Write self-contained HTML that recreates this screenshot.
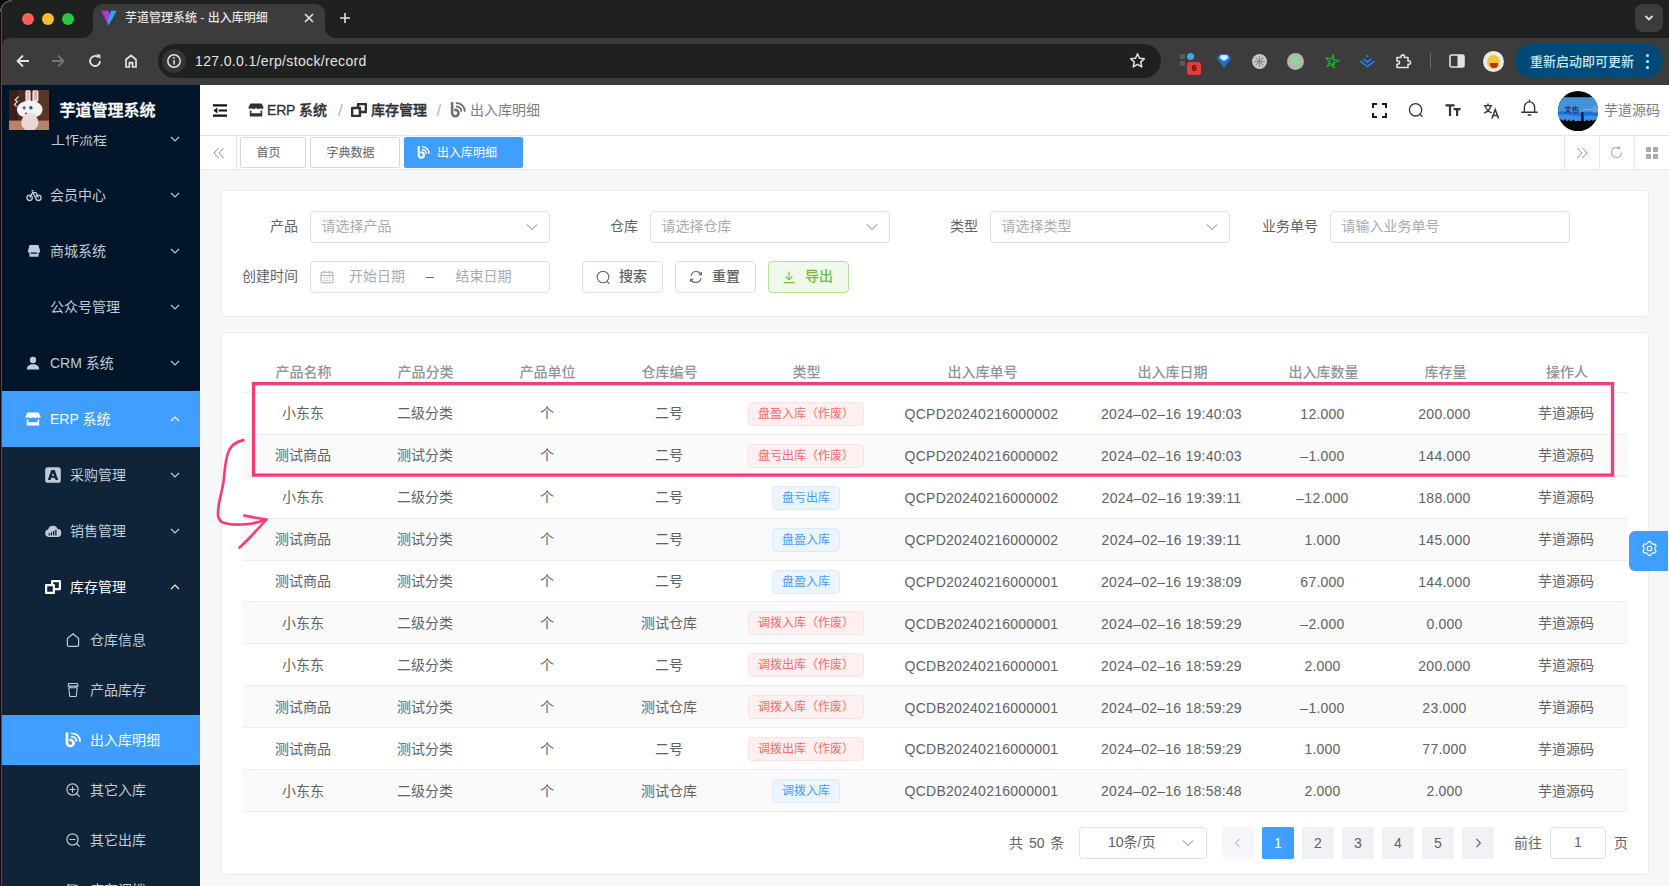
<!DOCTYPE html>
<html lang="zh-CN">
<head>
<meta charset="utf-8">
<title>芋道管理系统 - 出入库明细</title>
<style>
*{box-sizing:border-box;margin:0;padding:0}
html,body{width:1669px;height:886px;overflow:hidden;background:#f5f7f9}
body{position:relative;font-family:"Liberation Sans","Noto Sans CJK SC",sans-serif;font-size:14px;color:#606266;-webkit-font-smoothing:antialiased}
.abs{position:absolute}
svg{display:block}
/* ---------- browser chrome ---------- */
#tabbar{left:0;top:0;width:1669px;height:85px;background:#1f2020}
#toolbar{left:2px;top:38px;width:1667px;height:47px;background:#3c3c3c;border-radius:8px 0 0 0}
#tab{left:93px;top:4px;width:232px;height:34px;background:#3c3c3c;border-radius:10px 10px 0 0}
#tab:before,#tab:after{content:"";position:absolute;bottom:0;width:10px;height:10px}
#tab:before{left:-10px;background:radial-gradient(circle at 0 0,rgba(0,0,0,0) 9.5px,#3c3c3c 10px)}
#tab:after{right:-10px;background:radial-gradient(circle at 100% 0,rgba(0,0,0,0) 9.5px,#3c3c3c 10px)}
.dot{width:12px;height:12px;border-radius:50%;top:13px}
#tabtitle{left:125px;top:10px;font-size:12px;color:#e3e3e3;line-height:16px;white-space:nowrap;font-weight:500}
#urlbar{left:158px;top:44px;width:1003px;height:34px;border-radius:17px;background:#1f2020}
#urltext{left:195px;top:52px;font-size:14px;letter-spacing:.35px;line-height:18px;color:#e3e3e3;white-space:nowrap}
#update{left:1515px;top:44px;width:148px;height:34px;border-radius:17px;background:#004a77}
#updtext{left:1530px;top:53px;font-size:13px;line-height:17px;color:#c2e7ff;white-space:nowrap;font-weight:500}
#ddbtn{left:1635px;top:4px;width:28px;height:28px;border-radius:8px;background:#3c3c3c}

/* ---------- sidebar ---------- */
#side{left:2px;top:85px;width:198px;height:801px;background:#001529;overflow:hidden}
#logo{left:0;top:0;width:199px;height:50px;background:#001529;z-index:3}
#logoimg{left:7px;top:5px;width:40px;height:40px;overflow:hidden;background:#6b4a3c}
#logotitle{left:57.5px;top:14px;font-size:16px;font-weight:500;-webkit-text-stroke:.4px #fff;color:#fff;line-height:24px;white-space:nowrap}
#menu{left:-1px;top:50px;width:199px;height:751px;overflow:hidden}
.mi{position:absolute;left:0;width:199px;height:56px;line-height:56px;color:#bfcbd9;font-size:14px;white-space:nowrap}
.mi.s{height:50px;line-height:50px}
.mi.sub{background:#0f2438}
.mi.act{background:#409eff;color:#fff}
.mi .ic{position:absolute;top:50%;transform:translate(-50%,-50%)}
.mi .ar{position:absolute;left:168px;top:50%;margin-top:-6px}
.mi span{position:absolute;top:0}

/* ---------- header ---------- */
#hdr{left:200px;top:85px;width:1469px;height:51px;background:#fff;border-bottom:1px solid #e4e7ed}
#tags{left:200px;top:136px;width:1469px;height:34px;background:#fff;border-bottom:1px solid #e4e7ed}
.bc{top:99px;line-height:22px;font-size:14px;white-space:nowrap}
.bc.b{font-weight:500;color:#303133;-webkit-text-stroke:.35px #303133}
.bc.g{color:#7b7d82}
.tag{top:137px;height:31px;border:1px solid #d9d9d9;border-radius:2px;font-size:12px;line-height:30.5px;color:#606266;background:#fff;white-space:nowrap}
.tag.on{background:#409eff;border-color:#409eff;color:#fff}
.vsep{top:136px;width:1px;height:33px;background:#e4e7ed}

/* ---------- content ---------- */
.card{background:#fff;border:1px solid #e8ebf0;border-radius:4px}
.lbl{font-size:14px;line-height:31px;color:#606266;text-align:right;white-space:nowrap;width:56px}
.inp{height:32px;width:240px;border:1px solid #dcdfe6;border-radius:4px;background:#fff;font-size:14px;line-height:29px;color:#a8abb2;padding-left:10.5px;white-space:nowrap}
.btn{height:32px;width:81px;border:1px solid #dcdfe6;border-radius:4px;background:#fff;font-size:14px;line-height:29px;color:#606266;white-space:nowrap;font-weight:500}
.btn.g{background:#f0f9eb;border-color:#b3e19d;color:#67c23a}
.th{font-size:14px;line-height:23px;color:#909399;font-weight:500;text-align:center;white-space:nowrap}
.td{font-size:14px;line-height:23px;color:#606266;text-align:center;white-space:nowrap}
.td.n{letter-spacing:.24px}
.row{left:242.5px;width:1385.5px;border-bottom:1px solid #ebeef5}
.row.st{background:#fafafa}
.tg{height:24px;border-radius:4px;font-size:12px;line-height:22px;text-align:center;white-space:nowrap}
.tg.r{background:#fef0f0;border:1px solid #fde2e2;color:#f56c6c}
.tg.b{background:#ecf5ff;border:1px solid #d9ecff;color:#409eff}
.pg{top:827px;width:32px;height:32px;border-radius:2px;background:#f0f2f5;color:#606266;font-size:14px;line-height:32px;text-align:center}
.pg.on{background:#409eff;color:#fff}
</style>
</head>
<body>
<!-- browser chrome -->
<div id="tabbar" class="abs"></div>
<div id="toolbar" class="abs"></div>
<div id="tab" class="abs"></div>
<div class="abs dot" style="left:22px;background:#fe5f57"></div>
<div class="abs dot" style="left:42px;background:#febc2e"></div>
<div class="abs dot" style="left:62px;background:#28c840"></div>
<div id="tabtitle" class="abs">芋道管理系统 - 出入库明细</div>
<div id="urlbar" class="abs"></div>
<div id="urltext" class="abs">127.0.0.1/erp/stock/record</div>
<div id="update" class="abs"></div>
<div id="updtext" class="abs">重新启动即可更新</div>
<div id="ddbtn" class="abs"></div>

<!-- favicon -->
<svg class="abs" style="left:101px;top:10px" width="16" height="16" viewBox="0 0 16 16"><path d="M0.4 0.8 L7.4 15.4 L11 7.6 L6.4 0.8 Z" fill="#c02dd8"/><path d="M3.6 0.8 H7.2 L9 4.6 L7.4 8.6 Z" fill="#8d4be8"/><path d="M10.2 0.8 H15.8 L7.4 15.4 L6.6 11.2 Z" fill="#25a9f5"/></svg>
<!-- tab close / new tab -->
<svg class="abs" style="left:303px;top:12px" width="12" height="12" viewBox="0 0 12 12"><path d="M2 2 L10 10 M10 2 L2 10" stroke="#e3e3e3" stroke-width="1.7" fill="none"/></svg>
<svg class="abs" style="left:339px;top:12px" width="12" height="12" viewBox="0 0 12 12"><path d="M6 1 V11 M1 6 H11" stroke="#e3e3e3" stroke-width="1.6" fill="none"/></svg>
<svg class="abs" style="left:1643px;top:13px" width="12" height="10" viewBox="0 0 12 10"><path d="M2.5 3 L6 6.5 L9.5 3" stroke="#e3e3e3" stroke-width="1.8" fill="none"/></svg>
<!-- nav -->
<svg class="abs" style="left:15px;top:53px" width="16" height="16" viewBox="0 0 16 16"><path d="M14 8 H3 M8 2.5 L2.5 8 L8 13.5" stroke="#e3e3e3" stroke-width="1.8" fill="none"/></svg>
<svg class="abs" style="left:50px;top:53px" width="16" height="16" viewBox="0 0 16 16"><path d="M2 8 H13 M8 2.5 L13.5 8 L8 13.5" stroke="#777" stroke-width="1.8" fill="none"/></svg>
<svg class="abs" style="left:87px;top:53px" width="16" height="16" viewBox="0 0 16 16"><path d="M13 8 A5 5 0 1 1 11.4 4.3" stroke="#e3e3e3" stroke-width="1.8" fill="none"/><path d="M9 1.6 H13.4 V6 Z" fill="#e3e3e3"/></svg>
<svg class="abs" style="left:123px;top:53px" width="16" height="16" viewBox="0 0 16 16"><path d="M3 14 V6.5 L8 2.5 L13 6.5 V14 H9.6 V9.6 H6.4 V14 Z" stroke="#e3e3e3" stroke-width="1.7" fill="none" stroke-linejoin="round"/></svg>
<!-- info -->
<div class="abs" style="left:162px;top:49px;width:24px;height:24px;border-radius:50%;background:#343535"></div>
<svg class="abs" style="left:166px;top:53px" width="16" height="16" viewBox="0 0 16 16"><circle cx="8" cy="8" r="6.2" stroke="#e3e3e3" stroke-width="1.5" fill="none"/><path d="M8 7.2 V11.4" stroke="#e3e3e3" stroke-width="1.6"/><circle cx="8" cy="4.9" r="0.95" fill="#e3e3e3"/></svg>
<!-- star -->
<svg class="abs" style="left:1129px;top:52px" width="17" height="17" viewBox="0 0 17 17"><path d="M8.5 1.8 L10.5 6.3 L15.4 6.8 L11.7 10.1 L12.8 14.9 L8.5 12.4 L4.2 14.9 L5.3 10.1 L1.6 6.8 L6.5 6.3 Z" stroke="#e3e3e3" stroke-width="1.5" fill="none" stroke-linejoin="round"/></svg>
<!-- extensions -->
<div class="abs" style="left:1180px;top:54px;width:5px;height:5px;background:#5a5a5a;border-radius:1px"></div>
<div class="abs" style="left:1180px;top:61px;width:5px;height:5px;background:#5a5a5a;border-radius:1px"></div>
<div class="abs" style="left:1187px;top:53px;width:7px;height:7px;background:#39a9ea;border-radius:50% 50% 50% 50%"></div>
<div class="abs" style="left:1187px;top:62px;width:14px;height:13px;background:#ea3b35;border-radius:3px;color:#1f2020;font-size:9px;line-height:13px;text-align:center;font-weight:bold">6</div>
<svg class="abs" style="left:1217px;top:53px" width="14" height="16" viewBox="0 0 14 16"><path d="M3 1 H11 L14 5 L7 15 L0 5 Z" fill="#1a73d9"/><path d="M4 2 H10 L11.5 5 L7 8 L2.5 5 Z" fill="#cfeaff"/></svg>
<div class="abs" style="left:1252px;top:54px;width:15px;height:15px;border-radius:50%;background:#c8c8c8"></div>
<svg class="abs" style="left:1252px;top:54px" width="15" height="15" viewBox="0 0 15 15"><path d="M7.5 2 V13 M2 7.5 H13 M3.6 3.6 L11.4 11.4 M11.4 3.6 L3.6 11.4" stroke="#8c8c8c" stroke-width="1.2"/></svg>
<div class="abs" style="left:1287px;top:53px;width:17px;height:17px;border-radius:50%;background:#b5b5b5"></div>
<div class="abs" style="left:1291px;top:57px;width:9px;height:9px;border-radius:50%;background:#8fd68f"></div>
<svg class="abs" style="left:1323px;top:52px" width="18" height="18" viewBox="0 0 18 18"><g transform="rotate(12 9 9.4)"><path d="M9 2 L12.6 15.4 L2 7 H16 L5.4 15.4 Z" stroke="#1faa2c" stroke-width="1.2" fill="none" stroke-linejoin="round"/></g></svg>
<svg class="abs" style="left:1359px;top:53px" width="17" height="16" viewBox="0 0 17 16"><path d="M1.2 8 L8.4 13.6 L15.6 8 M4.4 5.8 L8.4 9.2 L12.4 5.8" stroke="#2b7cf0" stroke-width="1.6" fill="none"/><circle cx="8.4" cy="3.2" r="1.1" fill="#2b7cf0"/></svg>
<svg class="abs" style="left:1394px;top:52px" width="18" height="18" viewBox="0 0 18 18"><path d="M3 5.5 H7 V4.6 A1.7 1.7 0 0 1 10.4 4.6 V5.5 H14 V9 H14.9 A1.7 1.7 0 0 1 14.9 12.4 H14 V15.5 H3 V12.2 H4 A1.6 1.6 0 0 0 4 9 H3 Z" stroke="#e3e3e3" stroke-width="1.6" fill="none" stroke-linejoin="round"/></svg>
<div class="abs" style="left:1430px;top:53px;width:1px;height:16px;background:#6a6a6a"></div>
<svg class="abs" style="left:1449px;top:54px" width="16" height="14" viewBox="0 0 16 14"><rect x="1" y="1" width="14" height="12" rx="1.5" stroke="#e3e3e3" stroke-width="1.6" fill="none"/><rect x="8.5" y="1" width="6.5" height="12" fill="#e3e3e3"/></svg>
<div class="abs" style="left:1483px;top:51px;width:21px;height:21px;border-radius:50%;background:#ecebe6"></div>
<div class="abs" style="left:1487px;top:55px;width:13px;height:14px;border-radius:50%;background:#f6c33c"></div>
<div class="abs" style="left:1490px;top:63px;width:8px;height:5px;border-radius:0 0 5px 5px;background:#b4302b"></div>
<div class="abs" style="left:1645.5px;top:53.5px;width:3px;height:3px;border-radius:50%;background:#c2e7ff;box-shadow:0 6px 0 #c2e7ff,0 12px 0 #c2e7ff"></div>

<div id="side" class="abs">
<div id="menu" class="abs">
<div class="abs" style="left:0;top:312px;width:199px;height:500px;background:#0f2438"></div>
<div class="mi " style="top:-24px;"><span style="left:50px">工作流程</span><svg class="ar" width="12" height="12" viewBox="0 0 12 12"><path d="M2 4 L6 8 L10 4" stroke="currentColor" stroke-width="1.1" fill="none"/></svg></div>
<div class="mi " style="top:32px;"><svg class="ic" style="left:33px" width="16" height="14" viewBox="0 0 16 14"><circle cx="3.6" cy="9.8" r="2.7" stroke="currentColor" stroke-width="1.3" fill="none"/><circle cx="12.4" cy="9.8" r="2.7" stroke="currentColor" stroke-width="1.3" fill="none"/><path d="M3.6 9.8 L6.6 4.6 L9.4 9.4 M6.6 4.6 H10 L12.4 9.8 M5.4 2.6 H7.6" stroke="currentColor" stroke-width="1.3" fill="none"/></svg><span style="left:49px">会员中心</span><svg class="ar" width="12" height="12" viewBox="0 0 12 12"><path d="M2 4 L6 8 L10 4" stroke="currentColor" stroke-width="1.1" fill="none"/></svg></div>
<div class="mi " style="top:88px;"><svg class="ic" style="left:32.5px" width="12" height="12" viewBox="0 0 12 12"><path fill-rule="evenodd" d="M1.6 0 H10.4 L12 5.4 V7.4 H10.6 V11.8 H1.4 V7.4 H0 V5.4 Z M2.8 7.4 V8.8 H9.2 V7.4 Z" fill="currentColor"/></svg><span style="left:49px">商城系统</span><svg class="ar" width="12" height="12" viewBox="0 0 12 12"><path d="M2 4 L6 8 L10 4" stroke="currentColor" stroke-width="1.1" fill="none"/></svg></div>
<div class="mi " style="top:144px;"><span style="left:49px">公众号管理</span><svg class="ar" width="12" height="12" viewBox="0 0 12 12"><path d="M2 4 L6 8 L10 4" stroke="currentColor" stroke-width="1.1" fill="none"/></svg></div>
<div class="mi " style="top:200px;"><svg class="ic" style="left:32px" width="14" height="14" viewBox="0 0 14 14"><circle cx="7" cy="4" r="3.2" fill="currentColor"/><path d="M0.8 13.4 C0.8 9.6 3.6 8.2 7 8.2 C10.4 8.2 13.2 9.6 13.2 13.4 Z" fill="currentColor"/></svg><span style="left:49px">CRM 系统</span><svg class="ar" width="12" height="12" viewBox="0 0 12 12"><path d="M2 4 L6 8 L10 4" stroke="currentColor" stroke-width="1.1" fill="none"/></svg></div>
<div class="mi act" style="top:256px;"><svg class="ic" style="left:32px" width="16" height="14" viewBox="0 0 16 14"><path d="M2.4 0.6 H13.6 L15.6 4.4 C15.6 6 13.4 6.4 12.6 5 C11.8 6.4 9.2 6.4 8 5 C6.8 6.4 4.2 6.4 3.4 5 C2.6 6.4 0.4 6 0.4 4.4 Z" fill="currentColor"/><path d="M1.8 7.4 V13.4 H14.2 V7.4 H12.6 V10.2 H3.4 V7.4 Z" fill="currentColor"/></svg><span style="left:49px">ERP 系统</span><svg class="ar" width="12" height="12" viewBox="0 0 12 12"><path d="M2 8 L6 4 L10 8" stroke="currentColor" stroke-width="1.1" fill="none"/></svg></div>
<div class="mi sub" style="top:312px;"><svg class="ic" style="left:52px" width="16" height="16" viewBox="0 0 16 16"><rect x="0.2" y="0.2" width="15.6" height="15.6" rx="2.6" fill="currentColor"/><path d="M2.8 13 L6.3 3 H9.7 L13.2 13 H10.6 L8 5.8 L7.1 8.6 L9.8 9.8 L10.3 11.6 L6.5 10.4 L5.6 13 Z" fill="#0f2438"/></svg><span style="left:69px">采购管理</span><svg class="ar" width="12" height="12" viewBox="0 0 12 12"><path d="M2 4 L6 8 L10 4" stroke="currentColor" stroke-width="1.1" fill="none"/></svg></div>
<div class="mi sub" style="top:368px;"><svg class="ic" style="left:52px" width="17" height="13" viewBox="0 0 17 13"><path d="M4.2 12.4 A3.7 3.7 0 0 1 3.6 5.1 A5 5 0 0 1 13.2 4.6 A3.9 3.9 0 0 1 12.8 12.4 Z" fill="currentColor"/><path d="M4.8 11 V8.8 M7 11 V7.8 M9.2 11 V6.6 M11.4 11 V5.2" stroke="#0f2438" stroke-width="1.3"/></svg><span style="left:69px">销售管理</span><svg class="ar" width="12" height="12" viewBox="0 0 12 12"><path d="M2 4 L6 8 L10 4" stroke="currentColor" stroke-width="1.1" fill="none"/></svg></div>
<div class="mi sub" style="top:424px;color:#fff"><svg class="ic" style="left:52px" width="16" height="14" viewBox="0 0 16 14"><path d="M7.1 4 V1.1 H14.9 V9.1 H10" stroke="currentColor" stroke-width="2.2" fill="none" stroke-linejoin="round"/><rect x="1.1" y="5.1" width="7.8" height="7.8" stroke="currentColor" stroke-width="2.2" fill="none" stroke-linejoin="round"/></svg><span style="left:69px">库存管理</span><svg class="ar" width="12" height="12" viewBox="0 0 12 12"><path d="M2 8 L6 4 L10 8" stroke="currentColor" stroke-width="1.1" fill="none"/></svg></div>
<div class="mi sub s" style="top:480px;"><svg class="ic" style="left:72px" width="14" height="15" viewBox="0 0 14 15"><path d="M1.4 6 L7 1.2 L12.6 6 V12.4 Q12.6 13.8 11.2 13.8 H2.8 Q1.4 13.8 1.4 12.4 Z" stroke="currentColor" stroke-width="1.2" fill="none" stroke-linejoin="round"/></svg><span style="left:89px">仓库信息</span></div>
<div class="mi sub s" style="top:530px;"><svg class="ic" style="left:72px" width="12" height="15" viewBox="0 0 12 15"><path d="M1.6 1 H10.4 L11 3.6 H1 Z M1.8 5.2 H10.2 L9.2 14 H2.8 Z" stroke="currentColor" stroke-width="1.1" fill="none" stroke-linejoin="round"/><path d="M3 3.6 V5.2 M9 3.6 V5.2" stroke="currentColor" stroke-width="1.1"/></svg><span style="left:89px">产品库存</span></div>
<div class="mi act s" style="top:580px;"><svg class="ic" style="left:72px" width="16.5" height="15.5" viewBox="0 0 15 15" preserveAspectRatio="none"><path d="M2 0.8 V10.4 A3 3 0 1 0 5 7.4" stroke="currentColor" stroke-width="2.4" fill="none" stroke-linecap="round"/><path d="M6.2 1 A7.4 7.4 0 0 1 13.8 8.4 M6.2 4.2 A4.4 4.4 0 0 1 10.6 8.4" stroke="currentColor" stroke-width="1.7" fill="none" stroke-linecap="round"/></svg><span style="left:89px">出入库明细</span></div>
<div class="mi sub s" style="top:630px;"><svg class="ic" style="left:72px" width="15" height="15" viewBox="0 0 15 15"><circle cx="7" cy="7" r="5.6" stroke="currentColor" stroke-width="1.2" fill="none"/><path d="M4.4 7 H9.6 M7 4.4 V9.6 M11 11 L13.8 13.8" stroke="currentColor" stroke-width="1.2" stroke-linecap="round"/></svg><span style="left:89px">其它入库</span></div>
<div class="mi sub s" style="top:680px;"><svg class="ic" style="left:72px" width="15" height="15" viewBox="0 0 15 15"><circle cx="7" cy="7" r="5.6" stroke="currentColor" stroke-width="1.2" fill="none"/><path d="M4.4 7 H9.6 M11 11 L13.8 13.8" stroke="currentColor" stroke-width="1.2" stroke-linecap="round"/></svg><span style="left:89px">其它出库</span></div>
<div class="mi sub s" style="top:730px;"><svg class="ic" style="left:72px" width="14" height="14" viewBox="0 0 14 14"><path d="M2 1 V13 M2 2 H9 A3 3 0 0 1 9 8 H2" stroke="currentColor" stroke-width="1.2" fill="none"/></svg><span style="left:89px">库存调拨</span></div>
</div>
<div id="logo" class="abs"><div id="logoimg" class="abs"><svg width="40" height="40" viewBox="0 0 40 40"><rect width="40" height="40" fill="#4b2c22"/><rect x="28" y="0" width="12" height="31" fill="#5a3526"/><rect x="0" y="0" width="9" height="31" fill="#3a2019"/><rect y="30.6" width="40" height="9.4" fill="#b8826a"/><path d="M9.5 6.5 L6.2 10 L8.4 11.6 L5.4 14.6 L7.6 16.6" stroke="#d8d4d2" stroke-width="1.3" fill="none"/><rect x="16.4" y="0" width="5.2" height="12" rx="2" fill="#efe6e6"/><rect x="17.8" y="0" width="2.2" height="10" fill="#e4b7b3"/><rect x="23.4" y="0" width="6" height="12" rx="2" fill="#efe6e6"/><rect x="25.2" y="0" width="2.6" height="10" fill="#dfa89f"/><ellipse cx="20.8" cy="32.5" rx="8.6" ry="8.4" fill="#e9d6d8"/><ellipse cx="20.7" cy="19.4" rx="12.8" ry="9" fill="#f4f2f3"/><ellipse cx="20.5" cy="26" rx="7" ry="3" fill="#ecd9db"/><circle cx="15.2" cy="17.8" r="1.6" fill="#4a6a94"/><circle cx="21.9" cy="17.8" r="1.7" fill="#2f4f80"/><ellipse cx="17" cy="23.3" rx="1.1" ry="0.8" fill="#4a3a3a"/></svg></div><div id="logotitle" class="abs">芋道管理系统</div></div>
</div>
<div class="abs" style="left:0;top:0;width:1px;height:886px;background:#150b0f;z-index:9"></div><div class="abs" style="left:1px;top:0;width:1px;height:886px;background:#4c4c4e;z-index:9"></div><div class="abs" style="left:0;top:0;width:12px;height:12px;z-index:10;background:radial-gradient(circle at 12px 12px,rgba(0,0,0,0) 10.5px,#5a5a5c 11px,#5a5a5c 11.8px,#0b0508 12.3px)"></div>


<div id="hdr" class="abs"></div>
<div id="tags" class="abs"></div>
<svg class="abs" style="left:213px;top:104px" width="14" height="13" viewBox="0 0 14 13"><path d="M0 1.4 H14 M5.6 6.5 H14 M0 11.6 H14" stroke="#111" stroke-width="2.2"/><path d="M4.4 3.6 V9.4 L0.4 6.5 Z" fill="#111"/></svg>
<svg class="abs" style="left:248px;top:103px" width="16" height="14" viewBox="0 0 16 14"><path d="M2.4 0.6 H13.6 L15.6 4.4 C15.6 6 13.4 6.4 12.6 5 C11.8 6.4 9.2 6.4 8 5 C6.8 6.4 4.2 6.4 3.4 5 C2.6 6.4 0.4 6 0.4 4.4 Z" fill="#303133"/><path d="M1.8 7.4 V13.4 H14.2 V7.4 H12.6 V10.2 H3.4 V7.4 Z" fill="#303133"/></svg>
<div class="abs bc b" style="left:267px"><span style="font-weight:400;letter-spacing:-.2px;-webkit-text-stroke:.3px #303133">ERP</span> 系统</div>
<div class="abs bc" style="left:338px;color:#b4b7bd;font-size:17px;top:100px">/</div>
<svg class="abs" style="left:351px;top:103px" width="16" height="14" viewBox="0 0 16 14"><path d="M7.1 4 V1.1 H14.9 V9.1 H10" stroke="#303133" stroke-width="2.5" fill="none" stroke-linejoin="round"/><rect x="1.1" y="5.1" width="7.8" height="7.8" stroke="#303133" stroke-width="2.5" fill="none" stroke-linejoin="round"/></svg>
<div class="abs bc b" style="left:371px">库存管理</div>
<div class="abs bc" style="left:436.5px;color:#b4b7bd;font-size:17px;top:100px">/</div>
<svg class="abs" style="left:450px;top:102px" width="16" height="16" viewBox="0 0 15 15"><path d="M2 0.8 V10.4 A3 3 0 1 0 5 7.4" stroke="#6b6e74" stroke-width="2.4" fill="none" stroke-linecap="round"/><path d="M6.2 1 A7.4 7.4 0 0 1 13.8 8.4 M6.2 4.2 A4.4 4.4 0 0 1 10.6 8.4" stroke="#6b6e74" stroke-width="1.7" fill="none" stroke-linecap="round"/></svg>
<div class="abs bc g" style="left:470px">出入库明细</div>
<!-- right tools -->
<svg class="abs" style="left:1372px;top:103px" width="15" height="15" viewBox="0 0 15 15"><path d="M1 5 V1 H5 M10 1 H14 V5 M14 10 V14 H10 M5 14 H1 V10" stroke="#1a1a1a" stroke-width="2" fill="none"/></svg>
<svg class="abs" style="left:1408px;top:102px" width="16" height="16" viewBox="0 0 16 16"><circle cx="7.6" cy="7.8" r="6.2" stroke="#333" stroke-width="1.3" fill="none"/><path d="M12 12.4 L14.4 14.8" stroke="#333" stroke-width="1.3"/></svg>
<svg class="abs" style="left:1445px;top:104px" width="17" height="13" viewBox="0 0 17 13"><path d="M0.5 1.4 H9.5 M5 1.4 V12 M8.6 5.2 H15.6 M12.1 5.2 V12" stroke="#333" stroke-width="2.2" fill="none"/></svg>
<svg class="abs" style="left:1483px;top:103px" width="17" height="16" viewBox="0 0 17 16"><path d="M0.8 2.6 H9.2 M5 0.6 V2.6 M2.2 2.8 C3 6 5.6 8.6 8.8 9.8 M7.8 2.8 C7 6 4.4 8.8 1.2 10" stroke="#333" stroke-width="1.4" fill="none"/><path d="M9 15.4 L12.2 6.6 L15.6 15.4 M10.2 12.6 H14.4" stroke="#333" stroke-width="1.5" fill="none"/></svg>
<svg class="abs" style="left:1521px;top:99px" width="17" height="18" viewBox="0 0 17 18"><path d="M8.5 1.2 V2.4 M3.4 13 V8 A5.1 5.1 0 0 1 13.6 8 V13 M0.8 13.2 H16.2 M7.2 16 H9.8" stroke="#333" stroke-width="1.4" fill="none" stroke-linecap="round"/></svg>
<svg class="abs" style="left:1558px;top:90.5px" width="40" height="40" viewBox="0 0 40 40"><defs><clipPath id="avc"><circle cx="20" cy="20" r="20"/></clipPath></defs><g clip-path="url(#avc)"><rect width="40" height="40" fill="#04040a"/><rect y="6.2" width="40" height="23" fill="#4293dc"/><path d="M0 21 C8 19.5 16 23 24 21.5 C30 20.4 36 21 40 22 V30 H0 Z" fill="#1c6fd2"/><path d="M0 23.5 C10 22.5 18 26.5 27 25 C32 24.2 36 24.6 40 25.4 V30 H0 Z" fill="#3f8ff0"/><rect x="34.6" y="15.6" width="6" height="5.6" fill="#6e9fcf"/><path d="M25 18.6 H33" stroke="#8fc0ee" stroke-width="0.8"/><path d="M23.4 21 H25.4 L25.8 30 H23 Z" fill="#0c1830"/><path d="M0 29 L3 28.2 L5 30 L7 28 L9 30.4 L11 28.6 L13 30.6 L15.5 28.4 L17.5 30.6 L20 29.4 L22 30.8 L24 29 L27 30.6 L29 28.6 L31 30.4 L33 28.4 L35 30 L37 28.4 L40 29.4 V40 H0 Z" fill="#04040a"/><text x="6.2" y="21.2" font-size="7.4" font-weight="700" fill="#26267e" font-family="Liberation Sans, Noto Sans CJK SC, sans-serif">文也</text></g></svg>
<div class="abs bc g" style="left:1604px">芋道源码</div>
<!-- tags -->
<svg class="abs" style="left:213px;top:147px" width="12" height="12" viewBox="0 0 12 12"><path d="M5.6 1 L1 6 L5.6 11 M10.6 1 L6 6 L10.6 11" stroke="#909399" stroke-width="1" fill="none"/></svg>
<div class="abs vsep" style="left:236px"></div>
<div class="abs tag" style="left:240px;width:66px;padding-left:15.5px">首页</div>
<div class="abs tag" style="left:310px;width:90px;padding-left:15.5px">字典数据</div>
<div class="abs tag on" style="left:404px;width:119px;padding-left:32px">出入库明细</div>
<svg class="abs" style="left:417px;top:146px" width="13" height="13" viewBox="0 0 15 15"><path d="M2 0.8 V10.4 A3 3 0 1 0 5 7.4" stroke="#fff" stroke-width="2.4" fill="none" stroke-linecap="round"/><path d="M6.2 1 A7.4 7.4 0 0 1 13.8 8.4 M6.2 4.2 A4.4 4.4 0 0 1 10.6 8.4" stroke="#fff" stroke-width="1.7" fill="none" stroke-linecap="round"/></svg>
<div class="abs vsep" style="left:1564px"></div>
<div class="abs vsep" style="left:1599px"></div>
<div class="abs vsep" style="left:1634px"></div>
<svg class="abs" style="left:1576px;top:147px" width="12" height="12" viewBox="0 0 12 12"><path d="M1.4 1 L6 6 L1.4 11 M6.4 1 L11 6 L6.4 11" stroke="#909399" stroke-width="1" fill="none"/></svg>
<svg class="abs" style="left:1610px;top:146px" width="13" height="13" viewBox="0 0 13 13"><path d="M11.6 6.5 A5.1 5.1 0 1 1 9.6 2.4" stroke="#a8abb2" stroke-width="1.1" fill="none"/><path d="M9.6 0.4 V2.8 H7.2" stroke="#a8abb2" stroke-width="1.1" fill="none"/></svg>
<svg class="abs" style="left:1646px;top:147px" width="12" height="12" viewBox="0 0 12 12"><rect x="0" y="0" width="5" height="5" rx="0.8" fill="#a8abb2"/><rect x="7" y="0" width="5" height="5" rx="0.8" fill="#a8abb2"/><rect x="0" y="7" width="5" height="5" rx="0.8" fill="#a8abb2"/><rect x="7" y="7" width="5" height="5" rx="0.8" fill="#a8abb2"/></svg>

<div class="abs card" style="left:221px;top:190px;width:1428px;height:127px"></div>
<div class="abs lbl" style="left:242px;top:211px">产品</div><div class="abs inp" style="left:310px;top:211px">请选择产品</div><svg class="abs" style="left:525px;top:220px" width="14" height="14" viewBox="0 0 14 14"><path d="M1.8 4.4 L7 9.4 L12.2 4.4" stroke="#a8abb2" stroke-width="1.1" fill="none"/></svg>
<div class="abs lbl" style="left:582px;top:211px">仓库</div><div class="abs inp" style="left:650px;top:211px">请选择仓库</div><svg class="abs" style="left:865px;top:220px" width="14" height="14" viewBox="0 0 14 14"><path d="M1.8 4.4 L7 9.4 L12.2 4.4" stroke="#a8abb2" stroke-width="1.1" fill="none"/></svg>
<div class="abs lbl" style="left:922px;top:211px">类型</div><div class="abs inp" style="left:990px;top:211px">请选择类型</div><svg class="abs" style="left:1205px;top:220px" width="14" height="14" viewBox="0 0 14 14"><path d="M1.8 4.4 L7 9.4 L12.2 4.4" stroke="#a8abb2" stroke-width="1.1" fill="none"/></svg>
<div class="abs lbl" style="left:1262px;top:211px">业务单号</div><div class="abs inp" style="left:1330px;top:211px">请输入业务单号</div>
<div class="abs lbl" style="left:242px;top:261px">创建时间</div><div class="abs inp" style="left:310px;top:261px"></div>
<svg class="abs" style="left:320px;top:270px" width="14" height="14" viewBox="0 0 14 14"><rect x="1" y="2.2" width="12" height="10.6" rx="1" stroke="#a8abb2" stroke-width="1" fill="none"/><path d="M1 5.4 H13 M4.2 0.8 V3.4 M9.8 0.8 V3.4" stroke="#a8abb2" stroke-width="1" /><path d="M3.6 8 H5 M6.3 8 H7.7 M9 8 H10.4 M3.6 10.4 H5 M6.3 10.4 H7.7 M9 10.4 H10.4" stroke="#a8abb2" stroke-width="1"/></svg>
<div class="abs" style="left:349px;top:261px;line-height:31px;color:#a8abb2;white-space:nowrap">开始日期</div><div class="abs" style="left:426px;top:261px;line-height:31px;color:#606266">–</div><div class="abs" style="left:455.5px;top:261px;line-height:31px;color:#a8abb2;white-space:nowrap">结束日期</div>
<div class="abs btn" style="left:582px;top:261px;padding-left:36px">搜索</div><svg class="abs" style="left:596px;top:270px" width="15" height="15" viewBox="0 0 15 15"><circle cx="7" cy="7" r="5.8" stroke="#606266" stroke-width="1.1" fill="none"/><path d="M11.2 11.4 L13.4 13.8" stroke="#606266" stroke-width="1.1"/></svg>
<div class="abs btn" style="left:675px;top:261px;padding-left:36px">重置</div><svg class="abs" style="left:689px;top:270px" width="14" height="14" viewBox="0 0 14 14"><path d="M2 5.6 A5.3 5.3 0 0 1 12 4.6 M12 8.4 A5.3 5.3 0 0 1 2 9.4" stroke="#606266" stroke-width="1.1" fill="none"/><path d="M12.4 2 V4.8 H9.6 M1.6 12 V9.2 H4.4" stroke="#606266" stroke-width="1.1" fill="none"/></svg>
<div class="abs btn g" style="left:768px;top:261px;padding-left:36px">导出</div><svg class="abs" style="left:782px;top:270px" width="14" height="14" viewBox="0 0 14 14"><path d="M7 1.4 V9.6 M3.6 6.4 L7 9.8 L10.4 6.4 M1.6 12.6 H12.4" stroke="#67c23a" stroke-width="1.1" fill="none"/></svg>
<div class="abs card" style="left:221px;top:332px;width:1428px;height:543px"></div>
<div class="abs row" style="top:353px;height:39.8px"></div>
<div class="abs th" style="left:242.5px;top:361px;width:122px">产品名称</div><div class="abs th" style="left:364.5px;top:361px;width:122px">产品分类</div><div class="abs th" style="left:486.5px;top:361px;width:122px">产品单位</div><div class="abs th" style="left:608.5px;top:361px;width:122px">仓库编号</div><div class="abs th" style="left:730.5px;top:361px;width:152px">类型</div><div class="abs th" style="left:882.5px;top:361px;width:200px">出入库单号</div><div class="abs th" style="left:1082.5px;top:361px;width:180px">出入库日期</div><div class="abs th" style="left:1262.5px;top:361px;width:122px">出入库数量</div><div class="abs th" style="left:1384.5px;top:361px;width:122px">库存量</div><div class="abs th" style="left:1506.5px;top:361px;width:121px">操作人</div>
<div class="abs row" style="top:392.80px;height:41.93px"></div>
<div class="abs td" style="left:242px;top:402.30px;width:122px">小东东</div><div class="abs td" style="left:364px;top:402.30px;width:122px">二级分类</div><div class="abs td" style="left:486px;top:402.30px;width:122px">个</div><div class="abs td" style="left:608px;top:402.30px;width:122px">二号</div><div class="abs tg r" style="left:747.9px;top:401.80px;width:116px">盘盈入库（作废）</div><div class="abs td n" style="left:881.5px;top:403.00px;width:200px">QCPD20240216000002</div><div class="abs td n" style="left:1081.5px;top:403.00px;width:180px">2024–02–16 19:40:03</div><div class="abs td n" style="left:1261.5px;top:403.00px;width:122px">12.000</div><div class="abs td n" style="left:1383.5px;top:403.00px;width:122px">200.000</div><div class="abs td" style="left:1505.5px;top:402.30px;width:121px">芋道源码</div>
<div class="abs row st" style="top:434.73px;height:41.93px"></div>
<div class="abs td" style="left:242px;top:444.23px;width:122px">测试商品</div><div class="abs td" style="left:364px;top:444.23px;width:122px">测试分类</div><div class="abs td" style="left:486px;top:444.23px;width:122px">个</div><div class="abs td" style="left:608px;top:444.23px;width:122px">二号</div><div class="abs tg r" style="left:747.9px;top:443.73px;width:116px">盘亏出库（作废）</div><div class="abs td n" style="left:881.5px;top:444.93px;width:200px">QCPD20240216000002</div><div class="abs td n" style="left:1081.5px;top:444.93px;width:180px">2024–02–16 19:40:03</div><div class="abs td n" style="left:1261.5px;top:444.93px;width:122px">–1.000</div><div class="abs td n" style="left:1383.5px;top:444.93px;width:122px">144.000</div><div class="abs td" style="left:1505.5px;top:444.23px;width:121px">芋道源码</div>
<div class="abs row" style="top:476.66px;height:41.93px"></div>
<div class="abs td" style="left:242px;top:486.16px;width:122px">小东东</div><div class="abs td" style="left:364px;top:486.16px;width:122px">二级分类</div><div class="abs td" style="left:486px;top:486.16px;width:122px">个</div><div class="abs td" style="left:608px;top:486.16px;width:122px">二号</div><div class="abs tg b" style="left:771.9px;top:485.66px;width:68px">盘亏出库</div><div class="abs td n" style="left:881.5px;top:486.86px;width:200px">QCPD20240216000002</div><div class="abs td n" style="left:1081.5px;top:486.86px;width:180px">2024–02–16 19:39:11</div><div class="abs td n" style="left:1261.5px;top:486.86px;width:122px">–12.000</div><div class="abs td n" style="left:1383.5px;top:486.86px;width:122px">188.000</div><div class="abs td" style="left:1505.5px;top:486.16px;width:121px">芋道源码</div>
<div class="abs row st" style="top:518.59px;height:41.93px"></div>
<div class="abs td" style="left:242px;top:528.09px;width:122px">测试商品</div><div class="abs td" style="left:364px;top:528.09px;width:122px">测试分类</div><div class="abs td" style="left:486px;top:528.09px;width:122px">个</div><div class="abs td" style="left:608px;top:528.09px;width:122px">二号</div><div class="abs tg b" style="left:771.9px;top:527.59px;width:68px">盘盈入库</div><div class="abs td n" style="left:881.5px;top:528.79px;width:200px">QCPD20240216000002</div><div class="abs td n" style="left:1081.5px;top:528.79px;width:180px">2024–02–16 19:39:11</div><div class="abs td n" style="left:1261.5px;top:528.79px;width:122px">1.000</div><div class="abs td n" style="left:1383.5px;top:528.79px;width:122px">145.000</div><div class="abs td" style="left:1505.5px;top:528.09px;width:121px">芋道源码</div>
<div class="abs row" style="top:560.52px;height:41.93px"></div>
<div class="abs td" style="left:242px;top:570.02px;width:122px">测试商品</div><div class="abs td" style="left:364px;top:570.02px;width:122px">测试分类</div><div class="abs td" style="left:486px;top:570.02px;width:122px">个</div><div class="abs td" style="left:608px;top:570.02px;width:122px">二号</div><div class="abs tg b" style="left:771.9px;top:569.52px;width:68px">盘盈入库</div><div class="abs td n" style="left:881.5px;top:570.72px;width:200px">QCPD20240216000001</div><div class="abs td n" style="left:1081.5px;top:570.72px;width:180px">2024–02–16 19:38:09</div><div class="abs td n" style="left:1261.5px;top:570.72px;width:122px">67.000</div><div class="abs td n" style="left:1383.5px;top:570.72px;width:122px">144.000</div><div class="abs td" style="left:1505.5px;top:570.02px;width:121px">芋道源码</div>
<div class="abs row st" style="top:602.45px;height:41.93px"></div>
<div class="abs td" style="left:242px;top:611.95px;width:122px">小东东</div><div class="abs td" style="left:364px;top:611.95px;width:122px">二级分类</div><div class="abs td" style="left:486px;top:611.95px;width:122px">个</div><div class="abs td" style="left:608px;top:611.95px;width:122px">测试仓库</div><div class="abs tg r" style="left:747.9px;top:611.45px;width:116px">调拨入库（作废）</div><div class="abs td n" style="left:881.5px;top:612.65px;width:200px">QCDB20240216000001</div><div class="abs td n" style="left:1081.5px;top:612.65px;width:180px">2024–02–16 18:59:29</div><div class="abs td n" style="left:1261.5px;top:612.65px;width:122px">–2.000</div><div class="abs td n" style="left:1383.5px;top:612.65px;width:122px">0.000</div><div class="abs td" style="left:1505.5px;top:611.95px;width:121px">芋道源码</div>
<div class="abs row" style="top:644.38px;height:41.93px"></div>
<div class="abs td" style="left:242px;top:653.88px;width:122px">小东东</div><div class="abs td" style="left:364px;top:653.88px;width:122px">二级分类</div><div class="abs td" style="left:486px;top:653.88px;width:122px">个</div><div class="abs td" style="left:608px;top:653.88px;width:122px">二号</div><div class="abs tg r" style="left:747.9px;top:653.38px;width:116px">调拨出库（作废）</div><div class="abs td n" style="left:881.5px;top:654.58px;width:200px">QCDB20240216000001</div><div class="abs td n" style="left:1081.5px;top:654.58px;width:180px">2024–02–16 18:59:29</div><div class="abs td n" style="left:1261.5px;top:654.58px;width:122px">2.000</div><div class="abs td n" style="left:1383.5px;top:654.58px;width:122px">200.000</div><div class="abs td" style="left:1505.5px;top:653.88px;width:121px">芋道源码</div>
<div class="abs row st" style="top:686.31px;height:41.93px"></div>
<div class="abs td" style="left:242px;top:695.81px;width:122px">测试商品</div><div class="abs td" style="left:364px;top:695.81px;width:122px">测试分类</div><div class="abs td" style="left:486px;top:695.81px;width:122px">个</div><div class="abs td" style="left:608px;top:695.81px;width:122px">测试仓库</div><div class="abs tg r" style="left:747.9px;top:695.31px;width:116px">调拨入库（作废）</div><div class="abs td n" style="left:881.5px;top:696.51px;width:200px">QCDB20240216000001</div><div class="abs td n" style="left:1081.5px;top:696.51px;width:180px">2024–02–16 18:59:29</div><div class="abs td n" style="left:1261.5px;top:696.51px;width:122px">–1.000</div><div class="abs td n" style="left:1383.5px;top:696.51px;width:122px">23.000</div><div class="abs td" style="left:1505.5px;top:695.81px;width:121px">芋道源码</div>
<div class="abs row" style="top:728.24px;height:41.93px"></div>
<div class="abs td" style="left:242px;top:737.74px;width:122px">测试商品</div><div class="abs td" style="left:364px;top:737.74px;width:122px">测试分类</div><div class="abs td" style="left:486px;top:737.74px;width:122px">个</div><div class="abs td" style="left:608px;top:737.74px;width:122px">二号</div><div class="abs tg r" style="left:747.9px;top:737.24px;width:116px">调拨出库（作废）</div><div class="abs td n" style="left:881.5px;top:738.44px;width:200px">QCDB20240216000001</div><div class="abs td n" style="left:1081.5px;top:738.44px;width:180px">2024–02–16 18:59:29</div><div class="abs td n" style="left:1261.5px;top:738.44px;width:122px">1.000</div><div class="abs td n" style="left:1383.5px;top:738.44px;width:122px">77.000</div><div class="abs td" style="left:1505.5px;top:737.74px;width:121px">芋道源码</div>
<div class="abs row st" style="top:770.17px;height:41.93px"></div>
<div class="abs td" style="left:242px;top:779.67px;width:122px">小东东</div><div class="abs td" style="left:364px;top:779.67px;width:122px">二级分类</div><div class="abs td" style="left:486px;top:779.67px;width:122px">个</div><div class="abs td" style="left:608px;top:779.67px;width:122px">测试仓库</div><div class="abs tg b" style="left:771.9px;top:779.17px;width:68px">调拨入库</div><div class="abs td n" style="left:881.5px;top:780.37px;width:200px">QCDB20240216000001</div><div class="abs td n" style="left:1081.5px;top:780.37px;width:180px">2024–02–16 18:58:48</div><div class="abs td n" style="left:1261.5px;top:780.37px;width:122px">2.000</div><div class="abs td n" style="left:1383.5px;top:780.37px;width:122px">2.000</div><div class="abs td" style="left:1505.5px;top:779.67px;width:121px">芋道源码</div>
<div class="abs" style="left:1009px;top:827px;line-height:32px;color:#606266;white-space:nowrap;word-spacing:2px">共 50 条</div>
<div class="abs inp" style="left:1079px;top:827px;width:128px;color:#606266;padding-left:28px">10条/页</div><svg class="abs" style="left:1181px;top:836px" width="14" height="14" viewBox="0 0 14 14"><path d="M1.8 4.4 L7 9.4 L12.2 4.4" stroke="#a8abb2" stroke-width="1.1" fill="none"/></svg>
<div class="abs pg" style="left:1222px;background:#f5f7fa"></div><svg class="abs" style="left:1232px;top:837px" width="12" height="12" viewBox="0 0 12 12"><path d="M7.6 2 L3.6 6 L7.6 10" stroke="#c0c4cc" stroke-width="1.1" fill="none"/></svg>
<div class="abs pg on" style="left:1262px">1</div><div class="abs pg" style="left:1302px">2</div><div class="abs pg" style="left:1342px">3</div><div class="abs pg" style="left:1382px">4</div><div class="abs pg" style="left:1422px">5</div>
<div class="abs pg" style="left:1462px"></div><svg class="abs" style="left:1472px;top:837px" width="12" height="12" viewBox="0 0 12 12"><path d="M4.4 2 L8.4 6 L4.4 10" stroke="#606266" stroke-width="1.1" fill="none"/></svg>
<div class="abs" style="left:1514px;top:827px;line-height:32px;color:#606266;white-space:nowrap">前往</div>
<div class="abs inp" style="left:1550px;top:827px;width:56px;color:#606266;padding:0;text-align:center">1</div>
<div class="abs" style="left:1614px;top:827px;line-height:32px;color:#606266;white-space:nowrap">页</div>
<div class="abs" style="left:1629px;top:531px;width:39px;height:40px;background:#409eff;border-radius:6px 0 0 6px"></div>
<svg class="abs" style="left:1641.6px;top:541.4px" width="15" height="15" viewBox="0 0 15 15"><path d="M5.77 2.17 L6.26 0.61 L8.74 0.61 L9.23 2.17 L11.25 3.34 L12.85 2.98 L14.09 5.13 L12.98 6.34 L12.98 8.66 L14.09 9.87 L12.85 12.02 L11.25 11.66 L9.23 12.83 L8.74 14.39 L6.26 14.39 L5.77 12.83 L3.75 11.66 L2.15 12.02 L0.91 9.87 L2.02 8.66 L2.02 6.34 L0.91 5.13 L2.15 2.98 L3.75 3.34 Z" stroke="#fff" stroke-width="1.1" fill="none" stroke-linejoin="round"/><circle cx="7.5" cy="7.5" r="2.3" stroke="#fff" stroke-width="1.1" fill="none"/></svg>

<svg class="abs" style="left:0;top:0;pointer-events:none" width="1669" height="886" viewBox="0 0 1669 886"><rect x="253.5" y="383.6" width="1359" height="91.5" stroke="#f63b76" stroke-width="3.3" fill="none"/><path d="M243.4 440.1 C236 441.5 230 446 227.6 454 C225 463 224.6 472 223.7 480 C222.6 490 219.6 498 218.6 506.1 C218 511 217.6 514 218.2 516.4 C219 520 221 522 223.7 522.7 C228 524 232 524.6 236.3 524.6 C242 524.6 247 524.4 252.1 523.5 C257 522.6 262 521 266.4 519.5" stroke="#f63b76" stroke-width="2.6" fill="none" stroke-linecap="round"/><path d="M244.2 515.6 C251 517 259 518.4 266.4 519.5 C258 529 249 539 239.5 547.6" stroke="#f63b76" stroke-width="2.6" fill="none" stroke-linecap="round" stroke-linejoin="round"/></svg>
</body>
</html>
